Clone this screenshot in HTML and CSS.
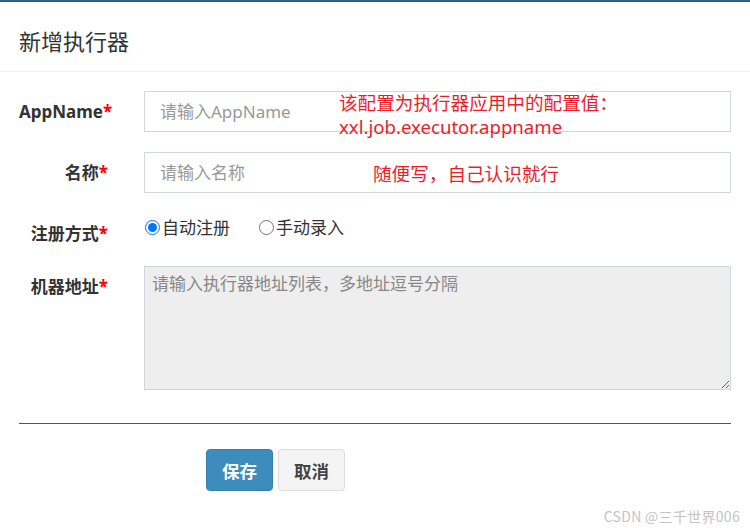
FILE: index.html
```html
<!DOCTYPE html>
<html lang="zh-CN">
<head>
<meta charset="utf-8">
<title>新增执行器</title>
<link rel="stylesheet" href="styles.css">
</head>
<body>
<div class="modal">
  <div class="modal-header">
    <h4 class="title">新增执行器</h4>
  </div>
  <div class="modal-body">
    <form class="form">
      <div class="row">
        <label class="lbl">AppName<span class="req">*</span></label>
        <div class="ctrl">
          <input class="inp" type="text" placeholder="请输入AppName">
          <div class="note note-1">该配置为执行器应用中的配置值：<br>xxl.job.executor.appname</div>
        </div>
      </div>
      <div class="row">
        <label class="lbl">名称<span class="req">*</span></label>
        <div class="ctrl">
          <input class="inp" type="text" placeholder="请输入名称">
          <div class="note note-2">随便写，自己认识就行</div>
        </div>
      </div>
      <div class="row">
        <label class="lbl">注册方式<span class="req">*</span></label>
        <div class="ctrl radios">
          <label class="radio"><input type="radio" name="addressType" checked>自动注册</label>
          <label class="radio"><input type="radio" name="addressType">手动录入</label>
        </div>
      </div>
      <div class="row">
        <label class="lbl">机器地址<span class="req">*</span></label>
        <div class="ctrl">
          <textarea class="ta" readonly placeholder="请输入执行器地址列表，多地址逗号分隔"></textarea>
        </div>
      </div>
      <div class="divider"></div>
      <div class="actions">
        <button type="button" class="btn btn-primary">保存</button>
        <button type="button" class="btn btn-default">取消</button>
      </div>
    </form>
  </div>
  <div class="watermark">CSDN @三千世界006</div>
</div>
</body>
</html>
```

FILE: styles.css
```css
* { box-sizing: border-box; }

html, body {
  margin: 0;
  padding: 0;
  background: #fff;
}

body {
  font-family: "Noto Sans", "Noto Sans CJK SC", sans-serif;
  color: #333;
  width: 750px;
  height: 528px;
  overflow: hidden;
}

.modal {
  position: relative;
  height: 528px;
  border-top: 2px solid #2d6382;
}

.modal-header {
  padding: 23px 19px 16px;
  border-bottom: 1px solid #f0f0f0;
}

.title {
  margin: 0;
  font-size: 22px;
  line-height: 30px;
  font-weight: normal;
  color: #333;
  font-family: "Noto Sans CJK SC", sans-serif;
}

.modal-body {
  padding: 19px 19px 0;
}

.form {
  display: flex;
  flex-direction: column;
  gap: 20px;
}

.row {
  display: flex;
  align-items: flex-start;
  gap: 36px;
}

.lbl {
  width: 89px;
  flex: none;
  text-align: right;
  font-weight: bold;
  font-size: 17px;
  line-height: 24px;
  padding-top: 9px;
  white-space: nowrap;
  font-family: "Noto Sans", "Noto Sans CJK SC", sans-serif;
}

.req {
  color: #f00;
  font-weight: bold;
}

.ctrl {
  flex: 1;
  position: relative;
}

.inp {
  display: block;
  width: 100%;
  height: 41px;
  border: 1px solid #d2d6de;
  border-radius: 0;
  padding: 0 15px;
  font-size: 17px;
  font-family: "Noto Sans", "Noto Sans CJK SC", sans-serif;
  color: #555;
  outline: none;
  background: #fff;
}

.inp::placeholder {
  color: #999;
}

.note {
  position: absolute;
  color: #ee1c2a;
  font-size: 18.6px;
  line-height: 24px;
  font-family: "Noto Sans", "Noto Sans CJK SC", sans-serif;
  white-space: nowrap;
  pointer-events: none;
}

.note-1 { left: 195px; top: 0; }
.note-2 { left: 229px; top: 10px; }

.radios {
  display: flex;
  align-items: center;
  gap: 28px;
  padding-top: 2px;
}

.radio {
  display: flex;
  align-items: center;
  font-size: 17px;
  line-height: 24px;
  font-family: "Noto Sans CJK SC", sans-serif;
  color: #333;
}

.radio input {
  width: 15px;
  height: 15px;
  margin: 0 2px 0 1px;
}

.ta {
  display: block;
  width: 100%;
  height: 124px;
  border: 1px solid #d2d6de;
  background: #eee;
  padding: 3px 7px;
  font-size: 17px;
  line-height: 26px;
  font-family: "Noto Sans CJK SC", sans-serif;
  color: #555;
  outline: none;
  border-radius: 0;
}

.ta::placeholder {
  color: #888;
}

.divider {
  height: 1px;
  background: #555;
  margin-top: 13px;
}

.actions {
  display: flex;
  gap: 5px;
  padding-left: 187px;
  margin-top: 5px;
}

.btn {
  width: 67px;
  height: 42px;
  border-radius: 4px;
  font-size: 17.5px;
  font-weight: bold;
  font-family: "Noto Sans CJK SC", sans-serif;
  padding: 0;
  cursor: pointer;
}

.btn-primary {
  background: #3c8dbc;
  border: 1px solid #367fa9;
  color: #fff;
}

.btn-default {
  background: #f4f4f4;
  border: 1px solid #ddd;
  color: #444;
}

.watermark {
  position: absolute;
  right: 10px;
  bottom: 4px;
  font-size: 14px;
  line-height: 16px;
  letter-spacing: 0.3px;
  color: #c4c4c4;
  font-family: "Noto Sans CJK SC", sans-serif;
}
```
